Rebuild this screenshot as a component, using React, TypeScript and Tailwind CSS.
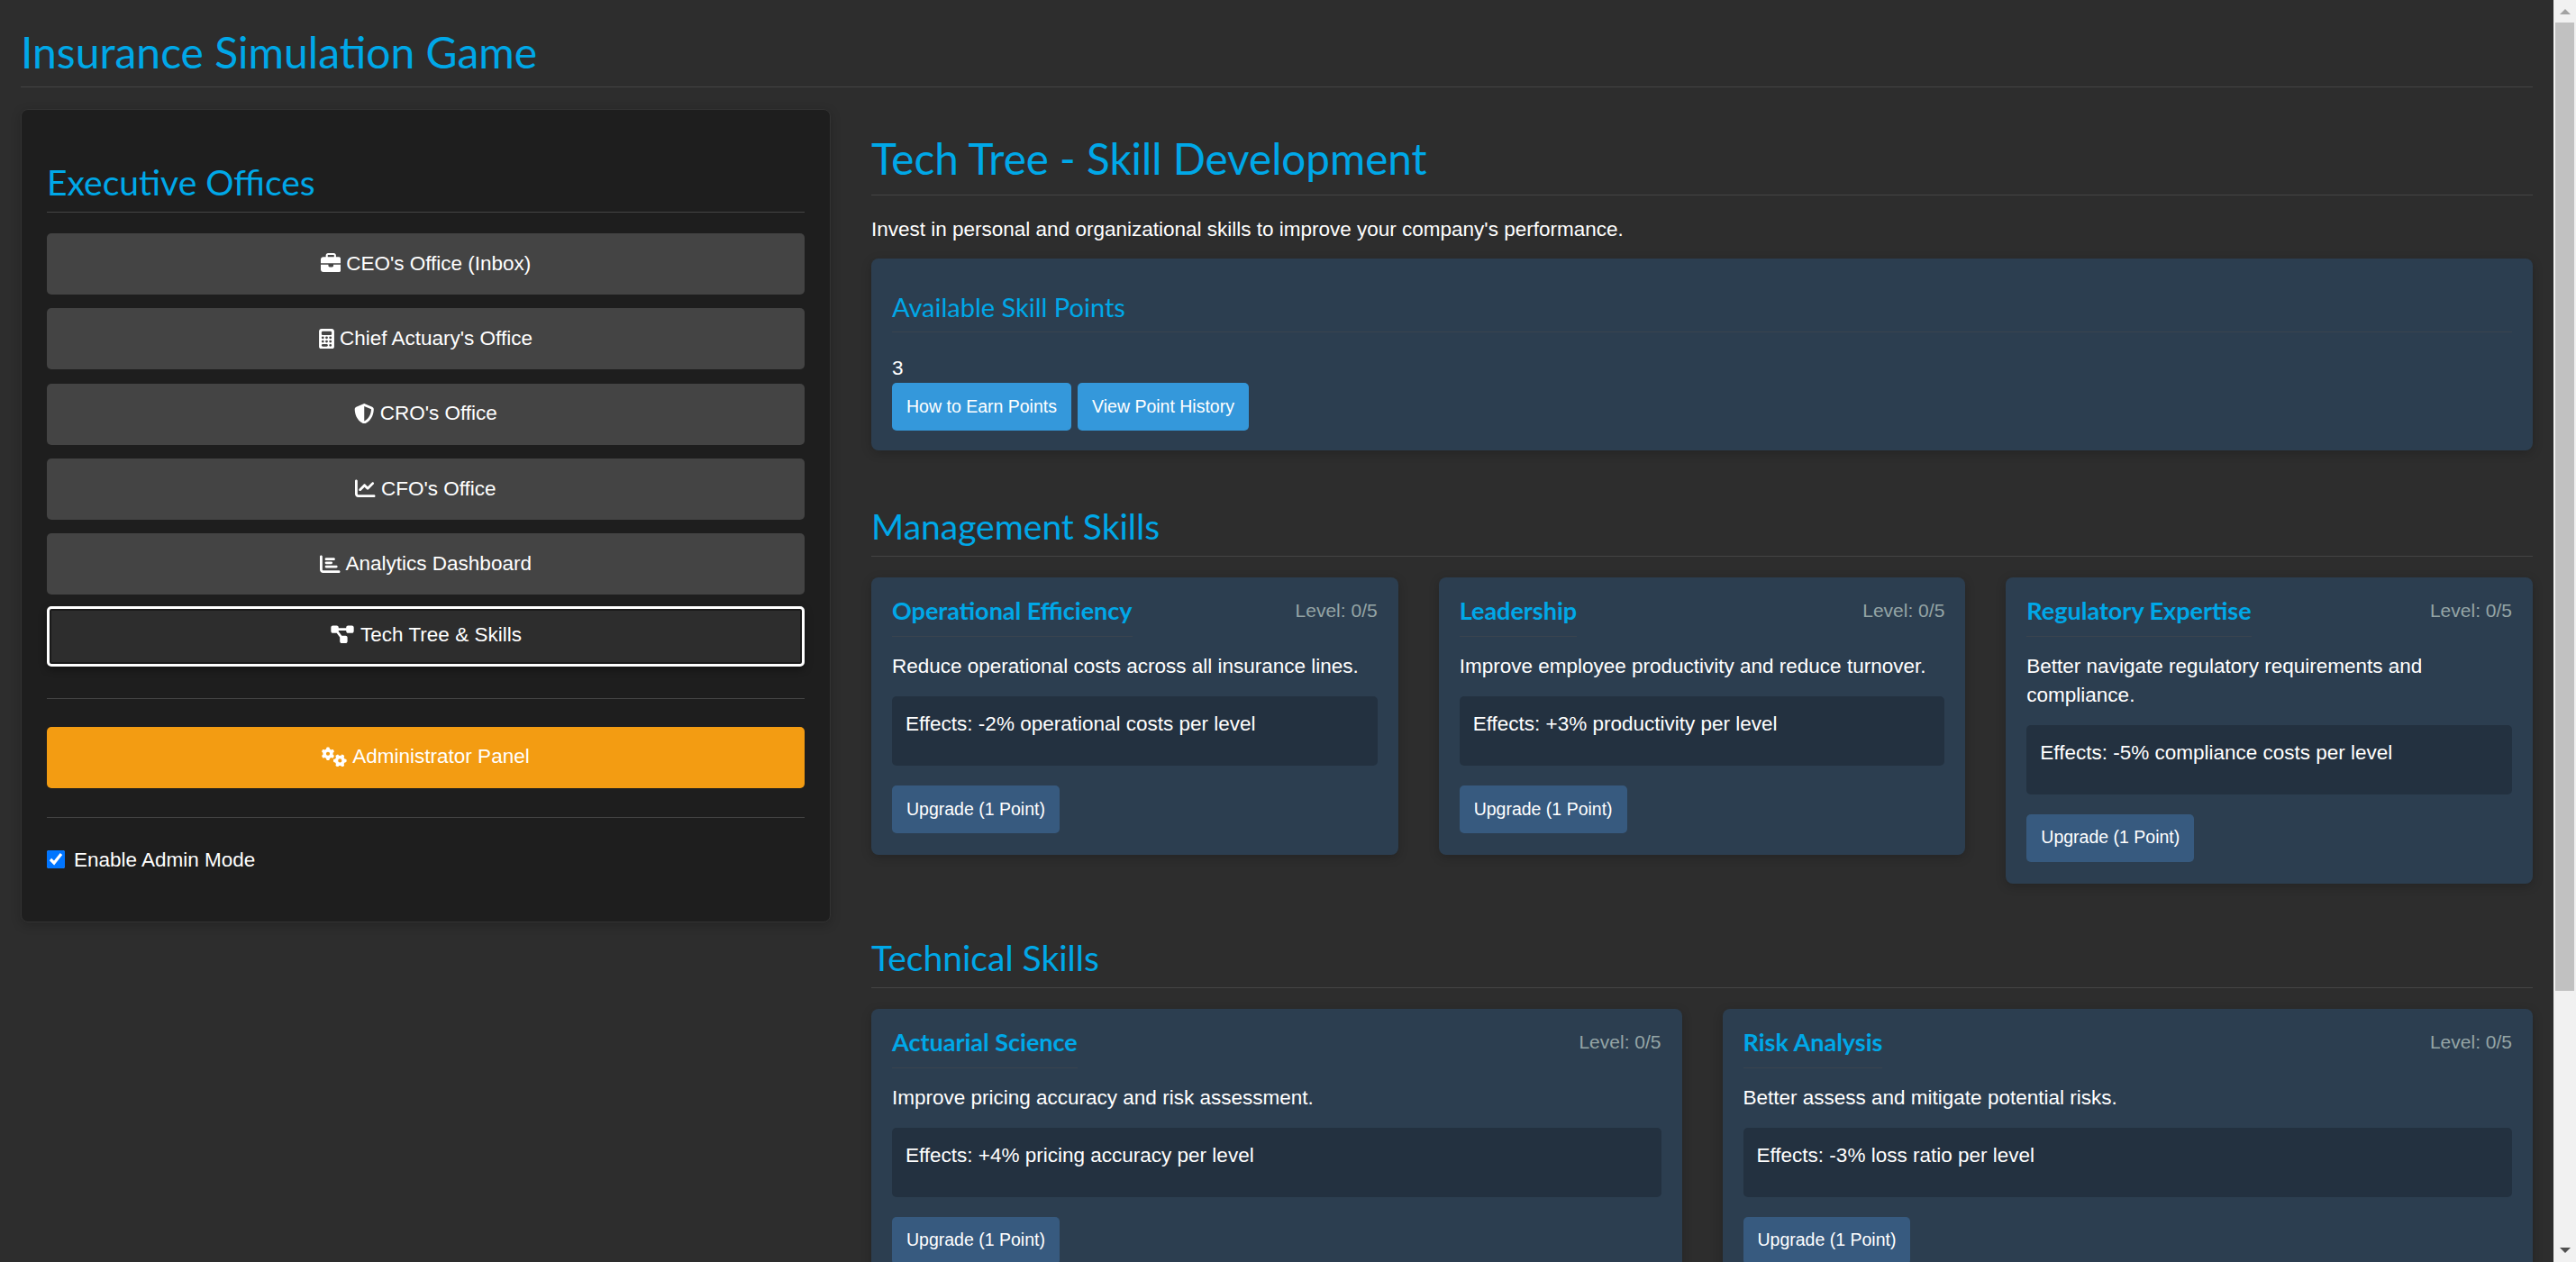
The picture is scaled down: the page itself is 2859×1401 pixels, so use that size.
import { FaBriefcase, FaCalculator, FaShieldHalved, FaChartLine, FaChartBar, FaDiagramProject, FaGears } from "react-icons/fa6";
import type { ReactNode } from "react";

type Skill = {
  name: string;
  description: string;
  effects: string;
};

const managementSkills: Skill[] = [
  {
    name: "Operational Efficiency",
    description: "Reduce operational costs across all insurance lines.",
    effects: "Effects: -2% operational costs per level",
  },
  {
    name: "Leadership",
    description: "Improve employee productivity and reduce turnover.",
    effects: "Effects: +3% productivity per level",
  },
  {
    name: "Regulatory Expertise",
    description: "Better navigate regulatory requirements and compliance.",
    effects: "Effects: -5% compliance costs per level",
  },
];

const technicalSkills: Skill[] = [
  {
    name: "Actuarial Science",
    description: "Improve pricing accuracy and risk assessment.",
    effects: "Effects: +4% pricing accuracy per level",
  },
  {
    name: "Risk Analysis",
    description: "Better assess and mitigate potential risks.",
    effects: "Effects: -3% loss ratio per level",
  },
];

function OfficeButton({ icon, label }: { icon: ReactNode; label: string }) {
  return (
    <button className="mb-[15.33px] flex h-[68px] w-full items-center justify-center gap-[6px] rounded-[5px] bg-[#444444] pb-[1px] text-white">
      {icon}
      {label}
    </button>
  );
}

function SkillCard({ skill }: { skill: Skill }) {
  return (
    <div className="rounded-[8px] bg-[#2c3e50] px-[23px] pt-[22px] pb-[24px] shadow-[0_3px_12px_rgba(0,0,0,0.2)]">
      <div className="flex items-start justify-between">
        <h3 className="border-b border-[#39444f] pb-[13px] font-['Lato'] text-[27px] leading-[30px] font-bold text-[#00a8e8]">
          {skill.name}
        </h3>
        <span className="mt-[1px] text-[21px] leading-[28px] text-[#95a5a6]">Level: 0/5</span>
      </div>
      <p className="mt-[17px] mb-[17.5px]">{skill.description}</p>
      <div className="h-[77px] rounded-[5px] bg-[#233140] px-[15px] py-[15px]">{skill.effects}</div>
      <button className="mt-[22px] block h-[53px] rounded-[5px] bg-[#375a7f] px-[16px] text-[19.5px] text-white">
        Upgrade (1 Point)
      </button>
    </div>
  );
}

function SectionTitle({ children }: { children: ReactNode }) {
  return (
    <h2 className="border-b border-[#444444] pb-[10px] font-['Lato'] text-[39px] leading-[46px] text-[#00a8e8]">
      {children}
    </h2>
  );
}

function Scrollbar() {
  return (
    <div className="flex w-[25px] shrink-0 flex-col items-center bg-[#f1f1f1]">
      <div className="mt-[10px] h-0 w-0 border-x-[6px] border-b-[6px] border-x-transparent border-b-[#a3a3a3]" />
      <div className="mt-[9px] h-[1075px] w-[21px] bg-[#c1c1c1]" />
      <div className="mt-auto mb-[10px] h-0 w-0 border-x-[6px] border-t-[6px] border-x-transparent border-t-[#505050]" />
    </div>
  );
}

export default function App() {
  return (
    <div className="flex h-screen overflow-hidden bg-[#2d2d2d] font-['Liberation_Sans',Arial,sans-serif] text-[22.5px] leading-[31.5px] text-white">
      <div className="min-w-0 flex-1 pr-[23px] pl-[23px]">
        <h1 className="h-[97px] border-b border-[#444444] pt-[30px] font-['Lato'] text-[48px] leading-[56px] text-[#00a8e8]">
          Insurance Simulation Game
        </h1>
        <div className="mt-[24px] flex items-start gap-[45px]">
          <aside className="w-[899px] shrink-0 rounded-[8px] border border-[#333333] bg-[#1e1e1e] px-[28px] pt-[57px] pb-[53px] shadow-[0_3px_12px_rgba(0,0,0,0.2)]">
            <SectionTitle>Executive Offices</SectionTitle>
            <div className="mt-[23px]">
              <OfficeButton icon={<FaBriefcase className="h-[22.5px] w-[22.5px]" />} label="CEO's Office (Inbox)" />
              <OfficeButton icon={<FaCalculator className="h-[22.5px] w-[17px]" />} label="Chief Actuary's Office" />
              <OfficeButton icon={<FaShieldHalved className="h-[22.5px] w-[22.5px]" />} label="CRO's Office" />
              <OfficeButton icon={<FaChartLine className="h-[22.5px] w-[22.5px]" />} label="CFO's Office" />
              <OfficeButton icon={<FaChartBar className="h-[22.5px] w-[22.5px]" />} label="Analytics Dashboard" />
              <button className="-mt-[3px] flex h-[67px] w-full items-center justify-center gap-[6px] rounded-[5px] border-[3px] border-white bg-[#2d2d2d] pb-[3px] text-white shadow-[inset_0_0_0_2px_#1a1a1a,0_3px_8px_rgba(0,0,0,0.4)]">
                <FaDiagramProject className="h-[22.5px] w-[28px]" />
                Tech Tree &amp; Skills
              </button>
            </div>
            <hr className="mt-[35px] border-[#444444]" />
            <button className="mt-[31px] flex h-[68px] w-full items-center justify-center gap-[6px] rounded-[5px] bg-[#f39c12] pb-[1px] text-white">
              <FaGears className="h-[22.5px] w-[28px]" />
              Administrator Panel
            </button>
            <hr className="mt-[32px] border-[#444444]" />
            <label className="mt-[31px] flex items-center gap-[10px]">
              <input type="checkbox" defaultChecked className="h-[20px] w-[20px] accent-[#0075ff]" />
              Enable Admin Mode
            </label>
          </aside>

          <main className="min-w-0 flex-1">
            <h2 className="h-[96px] border-b border-[#444444] pt-[27px] font-['Lato'] text-[47.6px] leading-[56px] text-[#00a8e8]">
              Tech Tree - Skill Development
            </h2>
            <p className="mt-[22px]">Invest in personal and organizational skills to improve your company's performance.</p>
            <div className="mt-[16.5px] h-[213px] rounded-[8px] bg-[#2c3e50] px-[23px] pt-[37px] shadow-[0_3px_12px_rgba(0,0,0,0.2)]">
              <h3 className="border-b border-[#39444f] pb-[10px] font-['Lato'] text-[29px] leading-[34px] text-[#00a8e8]">
                Available Skill Points
              </h3>
              <div className="mt-[23px] leading-[33px]">3</div>
              <div className="flex gap-[7px]">
                <button className="h-[53px] w-[199px] rounded-[5px] bg-[#3498db] text-[19.5px] text-white">How to Earn Points</button>
                <button className="h-[53px] w-[190px] rounded-[5px] bg-[#3498db] text-[19.5px] text-white">View Point History</button>
              </div>
            </div>
            <div className="mt-[61px]">
              <SectionTitle>Management Skills</SectionTitle>
            </div>
            <div className="mt-[23px] grid grid-cols-3 items-start gap-[45px]">
              {managementSkills.map((skill) => (
                <SkillCard key={skill.name} skill={skill} />
              ))}
            </div>
            <div className="mt-[59px]">
              <SectionTitle>Technical Skills</SectionTitle>
            </div>
            <div className="mt-[23px] grid grid-cols-2 items-start gap-[45px]">
              {technicalSkills.map((skill) => (
                <SkillCard key={skill.name} skill={skill} />
              ))}
            </div>
          </main>
        </div>
      </div>
      <Scrollbar />
    </div>
  );
}
